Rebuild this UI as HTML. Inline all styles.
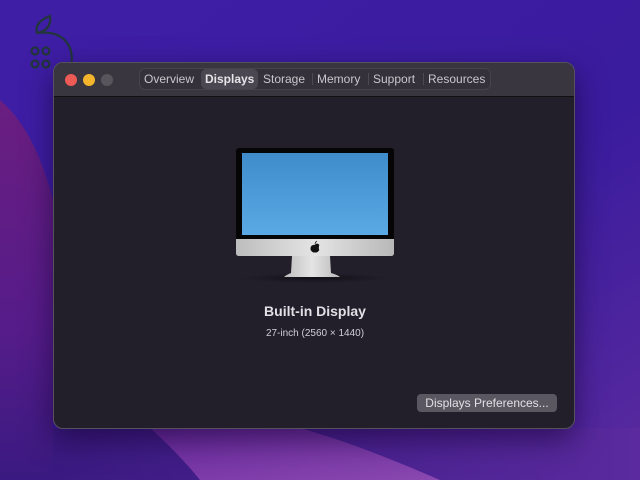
<!DOCTYPE html>
<html><head><style>
*{margin:0;padding:0;box-sizing:border-box}
body{width:640px;height:480px;overflow:hidden;position:relative;font-family:"Liberation Sans",sans-serif;background:#4320a8}
.bg{position:absolute;left:0;top:0}
.win{position:absolute;left:53px;top:62px;width:522px;height:367px;border-radius:10px;background:#221f2b;border:1px solid #55525c;box-shadow:0 10px 30px rgba(20,0,50,.6);overflow:hidden}
.tb{height:34px;background:#39363f;border-bottom:1px solid #111}
.dot{position:absolute;top:11px;width:12px;height:12px;border-radius:50%}
.tabs{position:absolute;left:85px;top:5px;height:22px;width:352px;border:1px solid #46434c;border-radius:6px;background:#34313a;font-size:12px;color:#c9c7cc}
.tabs span{position:absolute;top:0;line-height:20px;white-space:nowrap}
.tabs i{position:absolute;top:4px;width:1px;height:12px;background:#4c4953}
.on{background:#4a4751;border-radius:5px;color:#e6e5e8;font-weight:bold;padding:0 4px}
.t1{position:absolute;left:0;width:522px;top:240px;text-align:center;color:#e2e0e5;font-size:14px;font-weight:bold}
.t2{position:absolute;left:0;width:522px;top:265px;text-align:center;color:#d0ced3;font-size:10px}
.btn{position:absolute;left:363px;top:331px;width:140px;height:18px;border-radius:4px;background:#5a5760;color:#e2e0e5;font-size:12px;text-align:center;line-height:18px}
</style></head><body>
<svg class="bg" width="640" height="480">
<defs>
<linearGradient id="g" x1="0" y1="0" x2="1" y2="1"><stop offset="0" stop-color="#3f1ea6"/><stop offset=".6" stop-color="#3a1c9e"/><stop offset="1" stop-color="#5a2a9e"/></linearGradient>
<linearGradient id="m" x1="0" y1="0" x2="0" y2="1"><stop offset="0" stop-color="#6a1e80"/><stop offset=".6" stop-color="#561c8a"/><stop offset="1" stop-color="#3a1a80"/></linearGradient>
<linearGradient id="b" x1="0" y1="0" x2="1" y2="1"><stop offset="0" stop-color="#6a2a9e"/><stop offset="1" stop-color="#8a48b0"/></linearGradient>
<linearGradient id="d" x1="0" y1="0" x2="1" y2="0"><stop offset="0" stop-color="#3a1a80"/><stop offset=".5" stop-color="#4a2290"/><stop offset="1" stop-color="#5a2a9e"/></linearGradient>
</defs>
<rect width="640" height="480" fill="url(#g)"/>
<path d="M0 100 Q35 130 53 200 L53 480 L0 480Z" fill="url(#m)"/>
<rect x="53" y="428" width="587" height="52" fill="url(#d)"/>
<path d="M150 428 Q180 455 200 480 L440 480 Q360 445 300 428Z" fill="url(#b)"/>
<g fill="none" stroke="#22363a" stroke-width="2.2">
<path d="M37 33 Q34 22 50 16 Q52 30 37 33 Z"/>
<path d="M37 33 Q62 30 70 48 Q74 60 69 72"/>
<circle cx="35" cy="51" r="3.5"/><circle cx="46" cy="51" r="3.5"/><circle cx="35" cy="64" r="3.5"/><circle cx="46" cy="64" r="3.5"/>
</g>
</svg>
<div class="win">
<div class="tb"></div>
<div class="dot" style="left:11px;background:#ee5a55"></div>
<div class="dot" style="left:29px;background:#f4b52c"></div>
<div class="dot" style="left:47px;background:#58565c"></div>
<div class="tabs">
<span style="left:4px">Overview</span>
<span class="on" style="left:61px">Displays</span>
<span style="left:123px">Storage</span><i style="left:172px"></i>
<span style="left:177px">Memory</span><i style="left:228px"></i>
<span style="left:233px">Support</span><i style="left:283px"></i>
<span style="left:288px">Resources</span>
</div>
<svg style="position:absolute;left:170px;top:80px" width="180" height="140">
<defs>
<linearGradient id="s" x1="0" y1="0" x2="0" y2="1"><stop offset="0" stop-color="#3f8ccb"/><stop offset="1" stop-color="#5aa9e4"/></linearGradient>
<linearGradient id="c" x1="0" y1="0" x2="1" y2="0"><stop offset="0" stop-color="#bdbdbd"/><stop offset=".5" stop-color="#e4e4e4"/><stop offset="1" stop-color="#b8b8b8"/></linearGradient>
<radialGradient id="sh"><stop offset="0" stop-color="#000" stop-opacity=".5"/><stop offset="1" stop-color="#000" stop-opacity="0"/></radialGradient>
</defs>
<ellipse cx="90" cy="135" rx="75" ry="5" fill="url(#sh)"/>
<path d="M68 113 L106 113 L107 130 Q114 132 116 134 L60 134 Q62 132 67 130 Z" fill="url(#c)"/>
<rect x="12" y="5" width="158" height="93" rx="3" fill="#050505"/>
<rect x="18" y="10" width="146" height="82" fill="url(#s)"/>
<path d="M12 96 H170 V110 Q170 113 167 113 H15 Q12 113 12 110Z" fill="url(#c)"/>
<path d="M91 102 Q93 100 95 102 Q94 105 95 107 Q93 110 91 109 Q89 110 87 107 Q86 102 91 102Z M91 101 Q91 99 93 98" fill="#111" stroke="#111" stroke-width=".6"/>
</svg>
<div class="t1">Built-in Display</div>
<div class="t2">27-inch (2560 × 1440)</div>
<div class="btn">Displays Preferences...</div>
</div>
</body></html>
